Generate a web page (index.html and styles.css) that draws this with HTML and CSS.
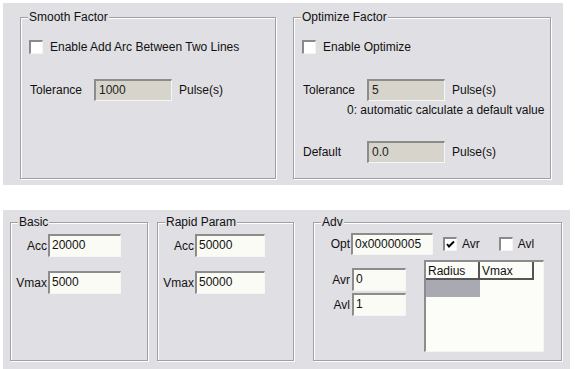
FILE: index.html
```html
<!DOCTYPE html>
<html lang="en">
<head>
  <meta charset="UTF-8">
  <title>Motion Parameters</title>
  <link rel="stylesheet" href="styles.css">
</head>
<body>
  <div class="panel panel-top">

    <div class="group smooth">
      <span class="group-title">Smooth Factor</span>
      <div class="check-row">
        <span class="check"></span>
        <span>Enable Add Arc Between Two Lines</span>
      </div>
      <div class="field-row first">
        <span class="label">Tolerance</span>
        <span class="box disabled">1000</span>
        <span class="unit">Pulse(s)</span>
      </div>
    </div>

    <div class="group optimize">
      <span class="group-title">Optimize Factor</span>
      <div class="check-row">
        <span class="check"></span>
        <span>Enable Optimize</span>
      </div>
      <div class="field-row first">
        <span class="label">Tolerance</span>
        <span class="box disabled">5</span>
        <span class="unit">Pulse(s)</span>
      </div>
      <div class="note">0: automatic calculate a default value</div>
      <div class="field-row default">
        <span class="label">Default</span>
        <span class="box disabled">0.0</span>
        <span class="unit">Pulse(s)</span>
      </div>
    </div>

  </div>

  <div class="panel panel-bottom">

    <div class="group basic">
      <span class="group-title">Basic</span>
      <div class="param-row">
        <span class="plabel">Acc</span>
        <span class="box edit w73">20000</span>
      </div>
      <div class="param-row">
        <span class="plabel">Vmax</span>
        <span class="box edit w73">5000</span>
      </div>
    </div>

    <div class="group rapid">
      <span class="group-title">Rapid Param</span>
      <div class="param-row">
        <span class="plabel">Acc</span>
        <span class="box edit w70">50000</span>
      </div>
      <div class="param-row">
        <span class="plabel">Vmax</span>
        <span class="box edit w70">50000</span>
      </div>
    </div>

    <div class="group adv">
      <span class="group-title">Adv</span>
      <div class="adv-top">
        <span class="plabel">Opt</span>
        <span class="box edit opt">0x00000005</span>
        <span class="check checked">
          <svg viewBox="0 0 13 13" width="13" height="13"><path d="M3 6 L5 8.5 L10 3.5" fill="none" stroke="#000" stroke-width="2"/></svg>
        </span>
        <span class="check-text">Avr</span>
        <span class="check avl"></span>
        <span class="check-text">Avl</span>
      </div>
      <div class="adv-body">
        <div class="adv-fields">
          <div class="adv-row">
            <span class="plabel">Avr</span>
            <span class="box edit small">0</span>
          </div>
          <div class="adv-row">
            <span class="plabel">Avl</span>
            <span class="box edit small">1</span>
          </div>
        </div>
        <div class="list">
          <div class="list-head">
            <span class="col radius">Radius</span>
            <span class="col vmax">Vmax</span>
          </div>
          <div class="list-row">
            <span class="cell radius selected"></span>
            <span class="cell vmax"></span>
          </div>
        </div>
      </div>
    </div>

  </div>
</body>
</html>
```

FILE: styles.css
```css
body {
  margin: 0;
  background: #fff;
  font-family: "Liberation Sans", Arial, sans-serif;
  font-size: 12px;
  color: #111;
}

.panel {
  display: flex;
  background: #e0dfe3;
}

.panel-top {
  margin: 3px 0 0 3px;
  width: 543px;
  height: 168px;
  padding: 14px 0 0 17px;
  gap: 17px;
}

.panel-bottom {
  margin: 25px 0 0 3px;
  width: 560px;
  height: 147px;
  padding: 12px 0 0 7px;
}

/* etched group box */
.group {
  position: relative;
  box-sizing: border-box;
  border: 1px solid #a0a0a4;
  box-shadow: 1px 1px 0 #fff, inset 1px 1px 0 #fff;
}

.group-title {
  position: absolute;
  top: -8px;
  left: 7px;
  padding: 0 1px;
  line-height: 14px;
  background: #e0dfe3;
}

.smooth {
  width: 256px;
  height: 162px;
  padding-left: 8px;
}

.optimize {
  width: 258px;
  height: 162px;
  padding-left: 8px;
}

.check-row {
  display: flex;
  align-items: center;
  gap: 7px;
  margin-top: 22px;
  height: 14px;
}

.check {
  box-sizing: border-box;
  display: inline-block;
  width: 14px;
  height: 14px;
  background: #fff;
  border-top: 2px solid #8a8a8a;
  border-left: 2px solid #8a8a8a;
  border-right: 1px solid #f4f4f4;
  border-bottom: 1px solid #f4f4f4;
  flex: none;
}

.check svg {
  display: block;
  margin: -1px 0 0 -1px;
}

.field-row {
  display: flex;
  align-items: center;
  height: 22px;
}

.field-row.first {
  margin-top: 25px;
}

.field-row.default {
  margin-top: 24px;
}

.label {
  width: 64px;
  padding-left: 1px;
}

.unit {
  margin-left: 7px;
}

.note {
  margin: 2px 0 0 45px;
  line-height: 14px;
}

/* sunken edit boxes */
.box {
  box-sizing: border-box;
  display: inline-block;
  height: 22px;
  line-height: 18px;
  padding-left: 3px;
  border-top: 2px solid #8c8c8c;
  border-left: 2px solid #8c8c8c;
  border-right: 1px solid #f6f6f6;
  border-bottom: 1px solid #f6f6f6;
}

.box.disabled {
  width: 78px;
  background: #d7d4cc;
  color: #222;
}

.box.edit {
  background: #fbfbf6;
  height: 23px;
  line-height: 19px;
  padding-left: 2px;
}

.w73 { width: 73px; }
.w70 { width: 70px; }

.basic {
  width: 138px;
  height: 139px;
}

.rapid {
  width: 137px;
  height: 139px;
  margin-left: 9px;
}

.adv {
  width: 249px;
  height: 139px;
  margin-left: 19px;
}

.param-row {
  display: flex;
  align-items: center;
  margin-top: 11px;
}

.param-row + .param-row {
  margin-top: 14px;
}

.plabel {
  width: 36px;
  padding-right: 1px;
  text-align: right;
}

.adv-top {
  display: flex;
  align-items: center;
  margin-top: 10px;
}

.box.opt {
  width: 82px;
  height: 22px;
  line-height: 18px;
}

.adv-top .check {
  margin-left: 10px;
}

.adv-top .check.avl {
  margin-left: 19px;
}

.check-text {
  margin-left: 5px;
}

.adv-body {
  display: flex;
  margin-top: 5px;
}

.adv-fields {
  padding-top: 8px;
}

.adv-row {
  display: flex;
  align-items: center;
  margin-bottom: 2px;
}

.box.small {
  width: 54px;
  margin-left: 1px;
}

/* list view */
.list {
  box-sizing: border-box;
  width: 120px;
  height: 92px;
  margin-left: 18px;
  background: #fcfcf8;
  border-top: 2px solid #8c8c8c;
  border-left: 2px solid #8c8c8c;
  border-right: 1px solid #f4f4f4;
  border-bottom: 1px solid #f4f4f4;
}

.list-head,
.list-row {
  display: flex;
}

.col {
  box-sizing: border-box;
  height: 18px;
  line-height: 18px;
  padding-left: 2px;
  border-right: 2px solid #555;
  border-bottom: 2px solid #555;
  background: #fcfcf8;
}

.radius { width: 54px; }
.vmax { width: 54px; }

.cell {
  height: 17px;
}

.cell.selected {
  background: #a9a9b1;
}
```
